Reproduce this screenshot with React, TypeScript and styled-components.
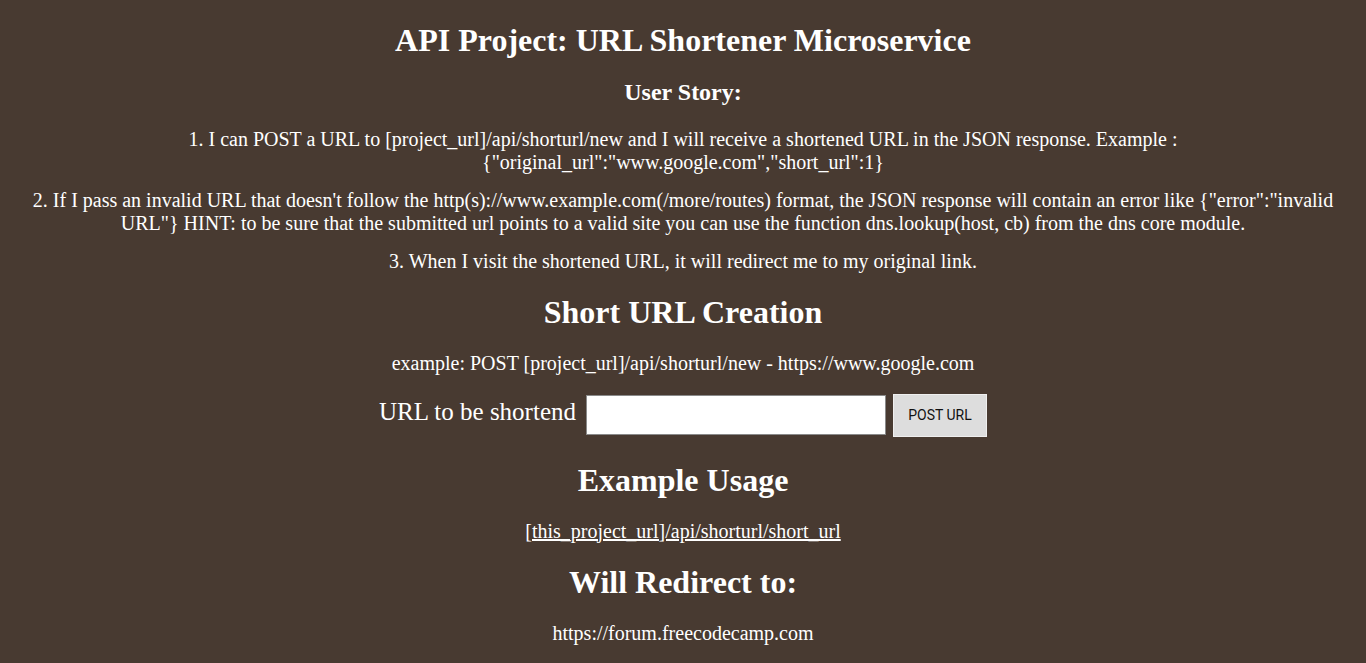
import React from "react";
import styled, { createGlobalStyle } from "styled-components";

const Global = createGlobalStyle`
  html, body { background: #483a31; }
  body {
    margin: 0;
    padding: 8px;
    color: #ffffff;
    font-family: "Liberation Serif", "Times New Roman", serif;
    font-size: 20px;
    text-align: center;
  }
`;

const Title = styled.h1`
  font-size: 32px;
  line-height: 37px;
  margin: 14px 0 19px;
`;

const SubTitle = styled.h3`
  font-size: 24px;
  line-height: 28px;
  margin: 19px 0 22px;
`;

const Story = styled.p`
  margin: 16px 0;
  line-height: 22.5px;
`;

const Section = styled.h2`
  font-size: 32px;
  line-height: 37px;
  margin: 21px 0;
`;

const Example = styled.p<{ $tight?: boolean }>`
  margin: 21px 0 ${(p) => (p.$tight ? "19px" : "21px")};
  line-height: 23px;
`;

const Form = styled.form`
  display: flex;
  justify-content: center;
  align-items: center;
  margin: 19px 0 25px;
`;

const Label = styled.label`
  font-size: 25px;
  margin: -6px 10px 0 0;
`;

const Input = styled.input`
  width: 300px;
  height: 40px;
  box-sizing: border-box;
  margin: 0 7px 1px 0;
  border: 1px solid #8a8a8a;
  background: #fff;
`;

const Button = styled.button`
  width: 94px;
  height: 43px;
  padding: 0;
  box-sizing: border-box;
  background: #dddddd;
  border: 1px solid #efefef;
  font-family: Roboto, "Liberation Sans", sans-serif;
  font-size: 14px;
  color: #111;
`;

const Link = styled.a`
  color: #fff;
  text-decoration: underline;
`;

export default function App() {
  return (
    <>
      <Global />
      <Title>API Project: URL Shortener Microservice</Title>
      <SubTitle>User Story:</SubTitle>
      <Story>
        1. I can POST a URL to [project_url]/api/shorturl/new and I will receive a shortened URL in the JSON response. Example : {'{"original_url":"www.google.com","short_url":1}'}
      </Story>
      <Story>
        2. If I pass an invalid URL that doesn't follow the http(s)://www.example.com(/more/routes) format, the JSON response will contain an error like {'{"error":"invalid URL"}'} HINT: to be sure that the submitted url points to a valid site you can use the function dns.lookup(host, cb) from the dns core module.
      </Story>
      <Story>3. When I visit the shortened URL, it will redirect me to my original link.</Story>
      <Section>Short URL Creation</Section>
      <Example $tight>example: POST [project_url]/api/shorturl/new - https://www.google.com</Example>
      <Form onSubmit={(e) => e.preventDefault()}>
        <Label htmlFor="url_input">URL to be shortend</Label>
        <Input id="url_input" type="text" name="url" />
        <Button type="submit">POST URL</Button>
      </Form>
      <Section>Example Usage</Section>
      <Example>
        <Link href="#">[this_project_url]/api/shorturl/short_url</Link>
      </Example>
      <Section>Will Redirect to:</Section>
      <Example>https://forum.freecodecamp.com</Example>
    </>
  );
}
